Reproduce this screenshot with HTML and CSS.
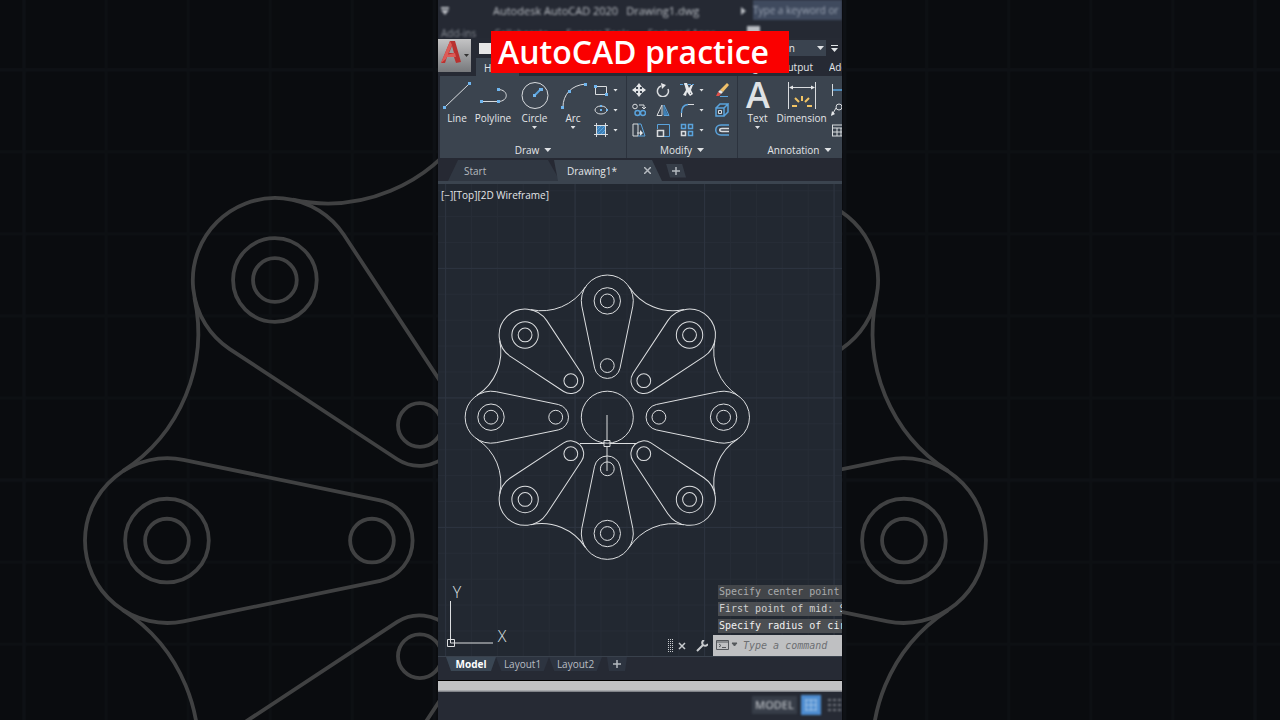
FILE: index.html
```
<!DOCTYPE html>
<html lang="en">
<head>
  <meta charset="utf-8">
  <title>AutoCAD practice</title>
  <link rel="stylesheet" href="styles.css">
</head>
<body>
  <!-- shared drawing parts -->
  <svg class="defs" width="0" height="0" aria-hidden="true">
    <defs>
      <g id="arm">
        <path d="M-25.5 -111.1A26 26 0 1 1 25.5 -111.1L12.7 -49A13 13 0 0 1 -12.7 -49Z"/>
        <circle cx="0" cy="-116.3" r="13.2"/>
        <circle cx="0" cy="-116.3" r="6.9"/>
        <circle cx="0" cy="-51.6" r="6.9"/>
        <path d="M-21.9 -130.3A52 52 0 0 1 -76.6 -107.6"/>
      </g>
      <g id="wheel">
        <use href="#arm"/>
        <use href="#arm" transform="rotate(45)"/>
        <use href="#arm" transform="rotate(90)"/>
        <use href="#arm" transform="rotate(135)"/>
        <use href="#arm" transform="rotate(180)"/>
        <use href="#arm" transform="rotate(225)"/>
        <use href="#arm" transform="rotate(270)"/>
        <use href="#arm" transform="rotate(315)"/>
      </g>
      <pattern id="minor" x="7.1" y="8.9" width="25.9" height="25.9" patternUnits="userSpaceOnUse">
        <path class="grid-minor" d="M0 .5H25.9M.5 0V25.9"/>
      </pattern>
      <pattern id="major" x="7.1" y="8.9" width="129.5" height="129.5" patternUnits="userSpaceOnUse">
        <path class="grid-major" d="M0 .5H129.5M.5 0V129.5"/>
      </pattern>
    </defs>
  </svg>

  <svg class="backdrop" viewBox="0 0 404 720" preserveAspectRatio="xMidYMid slice" aria-hidden="true">
    <g class="backdrop-grid">
      <rect width="404" height="720" fill="url(#minor)"/>
      <rect width="404" height="720" fill="url(#major)"/>
    </g>
    <use class="lines" href="#wheel" transform="translate(169 417)"/>
  </svg>

  <main class="phone">
    <header class="titlebar">
      <div class="title-row">
        <svg class="title-arrow" width="8" height="8" viewBox="0 0 8 8"><path d="M0 0h8v2H0zM0 3h8L4 8z"/></svg>
        <span class="app-name">Autodesk AutoCAD 2020</span>
        <span class="doc-name">Drawing1.dwg</span>
        <svg class="title-next" width="5" height="8" viewBox="0 0 5 8"><path d="M0 0l5 4-5 4z"/></svg>
        <input class="search" type="text" aria-label="Search" placeholder="Type a keyword or phrase">
      </div>
      <nav class="menu-row">
        <a href="#">Add-ins</a>
        <a href="#">Collaborate</a>
        <a href="#">Express Tools</a>
        <a href="#">Featured Apps</a>
        <span class="menu-box"></span>
      </nav>
    </header>

    <section class="quick">
      <button class="app-button" aria-label="Application menu">
        <svg width="33" height="33" viewBox="0 0 33 33">
          <path fill="#b9312f" d="M3 24L12 2h5l6 21-5 1-2-6H9l-2 6z"/>
          <path fill="#dc5b56" d="M3 24L12 2l2 4-6 14zM8 16l9-2 1 4H8z"/>
          <path fill="#9c9fa1" d="M11 14l3-7 2 7z"/>
          <path fill="#333" d="M26 15h5l-2.500 3z"/>
        </svg>
      </button>
      <div class="quick-main">
        <div class="quick-row">
          <span class="new-file"></span>
          <div class="workspace">
            <select aria-label="Workspace"><option>Drafting &amp; Annotation</option></select>
            <i class="caret big"></i>
          </div>
          <svg class="customize" width="7" height="7" viewBox="0 0 7 7"><path d="M0 0h7v1H0zM0 3h7L3.500 7z"/></svg>
        </div>
        <nav class="ribbon-tabs">
          <a class="tab-home" href="#">Home</a>
          <a class="tab-manage" href="#">Manage</a>
          <a class="tab-output" href="#">Output</a>
          <a href="#">Add-ins</a>
        </nav>
      </div>
    </section>

    <section class="ribbon">
      <div class="panel draw">
        <div class="tools">
          <button class="tool line">
            <svg width="28" height="28" viewBox="0 0 28 28"><path class="w" d="M2 26L26 3"/><path class="dot" d="M0 25h3v3H0zM25 1h3v3h-3z"/></svg>
            Line
          </button>
          <button class="tool polyline">
            <svg width="28" height="28" viewBox="0 0 28 28"><path class="w" d="M2 20.500H19C30 20.500 30 8.500 19 8.500"/><path class="dot" d="M1 19h3v3H1zM18 19h3v3h-3zM18 7h3v3h-3z"/></svg>
            Polyline
          </button>
          <button class="tool circle">
            <svg width="28" height="28" viewBox="0 0 28 28"><circle class="w" cx="14" cy="14.500" r="13"/><path class="b thick" d="M14 14l6-6"/><path class="dot" d="M12 13h3v3h-3zM18 7h4v3h-4z"/></svg>
            Circle
            <i class="caret"></i>
          </button>
          <button class="tool arc">
            <svg width="28" height="28" viewBox="0 0 28 28"><path class="w" d="M4 26C4 14 12 4 27 3"/><path class="dot" d="M2 25h3v3H2zM9 9h3v3H9zM25 2h3v3h-3z"/></svg>
            Arc
            <i class="caret"></i>
          </button>
          <div class="small-tools">
            <button aria-label="Rectangle"><svg width="14" height="14" viewBox="0 0 14 14"><path class="w" d="M1.500 3.500H12.500V11.500H1.500z"/><path class="dot" d="M0 2h3v3H0zM11 10h3v3h-3z"/></svg><i class="caret"></i></button>
            <button aria-label="Ellipse"><svg width="14" height="14" viewBox="0 0 14 14"><ellipse class="w" cx="7" cy="7" rx="6" ry="4"/><path class="dot" d="M6 6h2v2H6zM12 6h2v2h-2zM6 2h2v2H6z"/></svg><i class="caret"></i></button>
            <button aria-label="Hatch"><svg width="14" height="14" viewBox="0 0 14 14"><path fill="#3e7fb5" d="M3 3h8v8H3z"/><path class="b" d="M3 7l4-4M3 11l8-8M7 11l4-4"/><path class="w" d="M0 2.500H14M0 11.500H14M2.500 0V14M11.500 0V14"/></svg><i class="caret"></i></button>
          </div>
        </div>
        <button class="panel-title">Draw <i class="caret big"></i></button>
      </div>

      <div class="panel modify">
        <div class="modify-tools">
          <button aria-label="Move"><svg width="14" height="14" viewBox="0 0 14 14"><path class="w thick" d="M7 2V12M2 7H12"/><path class="wf" d="M7 0l3 4H4zM7 14l3-4H4zM0 7l4-3v6zM14 7l-4-3v6z"/></svg></button>
          <button aria-label="Rotate"><svg width="14" height="14" viewBox="0 0 14 14"><path class="w semi" d="M5 3A5.500 5.500 0 1 0 12 6"/><path class="wf" d="M5 0l5 2-4 4z"/></svg></button>
          <button aria-label="Trim"><svg width="14" height="14" viewBox="0 0 14 14"><path class="b" stroke-dasharray="3 1" d="M0 1.500H14"/><path class="wf" d="M4 0h3l2 5 2-3h2l-2 5 2 4-3 2-3-4-1 4-3-1 3-5z"/><path fill="#3b444f" d="M10 9l1 2-1 0z"/></svg><i class="caret"></i></button>
          <button aria-label="Erase"><svg width="14" height="14" viewBox="0 0 14 14"><path fill="#f0c06a" d="M12 0l2 2-6 7-3-2z"/><path fill="#e9eaea" d="M5 7l3 2-2 2-3-2z"/><path fill="#e04f49" d="M3 9l3 2-2 2H1z"/><path class="b" d="M5 13.500h8"/></svg></button>

          <button aria-label="Copy"><svg width="14" height="14" viewBox="0 0 14 14"><circle class="w" cx="3" cy="3.500" r="2.300"/><path class="w" d="M7 2h5v3M10 4l2 2 2-2"/><circle class="b semi" cx="5.500" cy="10" r="2.500"/><circle class="b semi" cx="11" cy="10" r="2.500"/></svg></button>
          <button aria-label="Mirror"><svg width="14" height="14" viewBox="0 0 14 14"><path class="w" d="M6 2V12.500H1z"/><path class="b" d="M8 2v10.500h5z"/><path fill="#3e7fb5" d="M8 4v8h4z"/></svg></button>
          <button aria-label="Fillet"><svg width="14" height="14" viewBox="0 0 14 14"><path class="w" d="M1.500 14V9M8 1.500h6"/><path class="b semi" d="M1.500 10Q1.500 2 8 1.500"/></svg><i class="caret"></i></button>
          <button aria-label="Explode"><svg width="14" height="14" viewBox="0 0 14 14"><path class="b semi" d="M1 5h8v8H1zM1 5l4-4h8l-4 4M13 1v8l-4 4"/><path class="w" d="M3.500 7.500h3v3h-3z"/></svg></button>

          <button aria-label="Stretch"><svg width="14" height="14" viewBox="0 0 14 14"><path class="w" d="M1 1h5v12H1zM5 10h4"/><path class="wf" d="M8 7l3 3-3 3z"/><path class="b" d="M6 1h3l4 12H6"/></svg></button>
          <button aria-label="Scale"><svg width="14" height="14" viewBox="0 0 14 14"><path class="b" d="M1.500 6V1.500h12v12H8"/><path class="w semi" d="M1.500 7.500h6v6h-6z"/></svg></button>
          <button aria-label="Array"><svg width="14" height="14" viewBox="0 0 14 14"><path class="b semi" d="M1.500 1.500h4v4h-4zM8.500 1.500h4v4h-4zM8.500 8.500h4v4h-4z"/><path class="w semi" d="M1.500 8.500h4v4h-4z"/></svg><i class="caret"></i></button>
          <button aria-label="Offset"><svg width="14" height="14" viewBox="0 0 14 14"><path class="b semi" d="M14 2H6C-1 2-1 12 6 12h8"/><path class="w semi" d="M14 5.500H7C4 5.500 4 8.500 7 8.500h7"/></svg></button>
        </div>
        <button class="panel-title">Modify <i class="caret big"></i></button>
      </div>

      <div class="panel annotation">
        <div class="tools">
          <button class="tool text">
            <svg width="28" height="28" viewBox="0 0 28 28"><text class="big-a" x="14" y="27" text-anchor="middle">A</text></svg>
            Text
            <i class="caret"></i>
          </button>
          <button class="tool dimension">
            <svg width="28" height="28" viewBox="0 0 28 28"><path class="w" d="M.5 1V28M27.500 1V28M2 6.500H26"/><path class="wf" d="M1 6.500l4-2v4zM27 6.500l-4-2v4z"/><path fill="none" stroke="#f2c465" stroke-width="2" d="M14 15v5M7 17l4 4M21 17l-4 4M4 25h5M24 25h-5"/></svg>
            Dimension
          </button>
          <div class="small-tools">
            <button aria-label="Linear"><svg width="14" height="14" viewBox="0 0 14 14"><path class="w" d="M1.500 1V13"/><path class="b semi" d="M2 7H14"/></svg></button>
            <button aria-label="Leader"><svg width="14" height="14" viewBox="0 0 14 14"><path class="w" d="M1 12l4-7"/><circle class="w" cx="8" cy="4" r="3"/><path class="wf" d="M0 13l1-5 3 3z"/></svg></button>
            <button aria-label="Table"><svg width="14" height="14" viewBox="0 0 14 14"><path class="w" d="M1 2h13M1 5h13M1 9h13M1 13h13M1.500 2V13M6 5v8M10 5v8"/></svg></button>
          </div>
        </div>
        <button class="panel-title">Annotation <i class="caret big"></i></button>
      </div>
    </section>

    <nav class="file-tabs">
      <button class="file-tab start">Start</button>
      <button class="file-tab active">Drawing1* <svg width="7" height="7" viewBox="0 0 7 7"><path d="M0 0l7 7M7 0L0 7"/></svg></button>
      <button class="add-tab" aria-label="New drawing"><svg width="8" height="8" viewBox="0 0 8 8"><path d="M4 0V8M0 4H8"/></svg></button>
    </nav>

    <section class="canvas">
      <svg class="drawing" viewBox="0 184 404 472" preserveAspectRatio="xMidYMid slice">
        <rect y="184" width="404" height="472" fill="url(#minor)"/>
        <rect y="184" width="404" height="472" fill="url(#major)"/>
        <g class="lines">
          <use href="#wheel" transform="translate(169.300 417.200)"/>
          <circle cx="169.300" cy="417.200" r="26"/>
          <path d="M169 415V440M169 446V471M142 443.500H166M172 443.500H198"/>
          <path d="M166 440.500h6v6h-6z"/>
          <!-- ucs icon -->
          <path d="M12.500 601V643H55M9.500 639.500h7v7h-7z"/>
        </g>
        <text class="axis" x="19" y="598" text-anchor="middle">Y</text>
        <text class="axis" x="64" y="642" text-anchor="middle">X</text>
      </svg>
      <span class="view-label">[−][Top][2D Wireframe]</span>

      <div class="command">
        <p class="old">Specify center point for circle</p>
        <p class="mid">First point of mid: Second point</p>
        <p class="last">Specify radius of circle</p>
        <div class="command-row">
          <svg class="grip" width="5" height="16" viewBox="0 0 5 16"><path stroke-dasharray="1 1" d="M.5 1V15M2.500 1V15M4.500 1V15"/></svg>
          <button aria-label="Close"><svg width="8" height="8" viewBox="0 0 8 8"><path class="semi" d="M1 1l6 6M7 1L1 7"/></svg></button>
          <button aria-label="Customize"><svg width="12" height="12" viewBox="0 0 12 12"><path class="thick" d="M1 11l6-6M8 0Q5 2 7 5q3 2 5-1"/></svg></button>
          <label class="prompt" for="cmd">
            <svg width="22" height="12" viewBox="0 0 22 12"><path d="M.5 1.500h12v9H.5zM.5 3h12M3 5l2 1.500L3 8M6 8.500h4"/><path class="tri" d="M16 4h5l-2.500 3z"/></svg>
          </label>
          <input id="cmd" type="text" aria-label="Command" placeholder="Type a command">
        </div>
      </div>
    </section>

    <nav class="layout-tabs">
      <button class="layout model">Model</button>
      <button class="layout">Layout1</button>
      <button class="layout">Layout2</button>
      <button class="layout plus" aria-label="New layout"><svg width="8" height="8" viewBox="0 0 8 8"><path d="M4 0V8M0 4H8"/></svg></button>
    </nav>

    <footer class="status">
      <div class="scroll"></div>
      <div class="status-row">
        <button class="model-button">MODEL</button>
        <button class="grid-on" aria-label="Grid"><svg width="12" height="12" viewBox="0 0 12 12"><path d="M0 1h12M0 6h12M0 11h12M1 0v12M6 0v12M11 0v12"/></svg></button>
        <button class="snap" aria-label="Snap"><svg width="14" height="14" viewBox="0 0 14 14"><path stroke-dasharray="3 2" d="M0 2h14M0 7h14M0 12h14"/></svg></button>
      </div>
    </footer>

    <h1 class="caption">AutoCAD practice</h1>
  </main>
</body>
</html>
```

FILE: styles.css
```
* {
  box-sizing: border-box;
}
body {
  margin: 0;
  height: 100vh;
  overflow: hidden;
  background: #0a0c0f;
  color: #e4e6e9;
  font-family: "Open Sans", "Noto Sans", sans-serif;
  font-size: 10px;
  line-height: 14px;
  display: flex;
  justify-content: center;
}
button,
input,
select {
  font: inherit;
  color: inherit;
  background: none;
  border: 0;
  padding: 0;
  margin: 0;
}
button {
  cursor: pointer;
}
a {
  color: inherit;
  text-decoration: none;
}
svg {
  display: block;
  flex: none;
}
.defs {
  position: absolute;
}

/* enlarged dim copy of the drawing behind the video */
.backdrop {
  position: absolute;
  width: 100%;
  height: 100%;
}
.backdrop .lines {
  stroke: #404142;
  stroke-width: 1.2;
}
.backdrop-grid {
  opacity: 0.12;
}
.lines {
  fill: none;
  stroke: #dcdee0;
}
.grid-minor {
  stroke: #262c36;
}
.grid-major {
  stroke: #2d3440;
}

.phone {
  position: relative;
  height: 100%;
  aspect-ratio: 101 / 180;
  overflow: hidden;
  background: #262a34;
  display: flex;
  flex-direction: column;
}

/* title bar */
.titlebar {
  height: 38px;
  overflow: hidden;
  color: #b9bdc3;
  background: #252933;
}
.title-row {
  height: 22px;
  display: flex;
  align-items: center;
  padding-left: 3px;
  font-size: 11px;
  filter: blur(1px);
}
.titlebar svg {
  fill: #b9bdc3;
}
.app-name {
  margin-left: 44px;
  white-space: nowrap;
}
.doc-name {
  margin-left: 8px;
}
.title-next {
  margin-left: auto;
}
.search {
  width: 89px;
  height: 20px;
  margin: 0 0 2px 7px;
  background: #3f4a5e;
  font-size: 10px;
}
.search::placeholder {
  color: #9aa3b2;
}
.menu-row {
  display: flex;
  gap: 18px;
  padding: 4px 3px;
  color: #858a92;
  white-space: nowrap;
  filter: blur(1px);
}
.menu-box {
  width: 13px;
  height: 8px;
  margin-left: 14px;
  background: #b9bdc3;
}

/* quick access */
.quick {
  height: 38px;
  display: flex;
}
.app-button {
  width: 33px;
  height: 33px;
  margin-top: 1px;
  background: linear-gradient(#c4c4c5, #77797c);
}
.quick-main {
  flex: 1;
  min-width: 0;
}
.quick-row {
  height: 20px;
  padding: 0 4px 0 8px;
  display: flex;
  align-items: center;
}
.new-file {
  width: 14px;
  height: 11px;
  background: #e6e6e6;
}
.workspace {
  width: 150px;
  height: 16px;
  margin-left: auto;
  padding-right: 2px;
  display: flex;
  align-items: center;
  background: #3a434f;
}
.workspace select {
  flex: 1;
  min-width: 0;
  padding-right: 22px;
  appearance: none;
  text-align-last: right;
}
.customize {
  fill: #dfe2e5;
  margin-left: 5px;
}
.ribbon-tabs {
  height: 18px;
  display: flex;
  align-items: center;
  padding-left: 5px;
  white-space: nowrap;
}
.tab-home {
  width: 43px;
  height: 18px;
  padding: 3px 8px 0;
  background: #3b444f;
}
.tab-manage {
  margin-left: auto;
}
.tab-output {
  margin: 0 16px;
}
.ribbon-tabs a:last-child {
  width: 13px;
  overflow: hidden;
}

/* ribbon */
.ribbon {
  height: 82px;
  margin-left: 2px;
  display: flex;
  overflow: hidden;
  background: #3b444f;
}
.panel {
  flex: none;
  display: flex;
  flex-direction: column;
  justify-content: space-between;
  border-right: 1px solid #2c333e;
}
.draw {
  width: 187px;
}
.modify {
  width: 111px;
}
.annotation {
  width: 124px;
}
.tools {
  display: flex;
  height: 62px;
}
.tool {
  padding-top: 5px;
  display: flex;
  flex-direction: column;
  align-items: center;
}
.tool svg {
  margin-bottom: 2px;
}
.line {
  width: 34px;
}
.polyline {
  width: 38px;
}
.circle {
  width: 45px;
}
.arc {
  width: 32px;
}
.text {
  width: 39px;
}
.dimension {
  width: 49px;
}
.small-tools {
  padding: 4px 0 0 5px;
}
.small-tools button,
.modify-tools button {
  height: 20px;
  display: flex;
  align-items: center;
  gap: 5px;
}
.modify-tools {
  padding: 4px 0 0 5px;
  display: grid;
  grid-template-columns: 24px 24px 35px 24px;
}
.w {
  fill: none;
  stroke: #d9dcdf;
}
.b {
  fill: none;
  stroke: #5aa3dc;
}
.semi {
  stroke-width: 1.5;
}
.thick {
  stroke-width: 2;
}
.wf {
  fill: #e6e8ea;
}
.dot {
  fill: #6fb5ee;
}
.big-a {
  fill: #dfe2e5;
  font-size: 36px;
  font-weight: 600;
}
.caret {
  width: 5px;
  height: 3px;
  background: #dfe2e5;
  clip-path: polygon(0 0, 100% 0, 50% 100%);
}
.tool .caret {
  margin-top: 1px;
}
.caret.big {
  width: 7px;
  height: 4px;
}
.panel-title {
  height: 16px;
  display: flex;
  align-items: center;
  justify-content: center;
  gap: 5px;
}

/* file tabs */
.file-tabs {
  height: 26px;
  display: flex;
  align-items: center;
  padding: 2px 0 0 10px;
  background: #262933;
  border-bottom: 3px solid #3b444f;
}
.file-tab {
  height: 21px;
  display: flex;
  align-items: center;
  justify-content: space-between;
}
.start {
  width: 112px;
  padding-left: 16px;
  justify-content: flex-start;
  color: #b4b9bf;
  background: #303742;
  clip-path: polygon(0 100%, 10px 0, 100px 0, 112px 100%);
}
.active {
  width: 108px;
  margin-left: -6px;
  padding: 0 11px 0 13px;
  background: #3b444f;
  clip-path: polygon(0 0, 98px 0, 100% 100%, 4px 100%);
}
.file-tab svg,
.add-tab svg,
.plus svg {
  stroke: #b4b9bf;
  stroke-width: 1.5;
}
.add-tab {
  width: 20px;
  height: 14px;
  margin-left: 4px;
  padding-left: 6px;
  background: #363d48;
  clip-path: polygon(0 0, 80% 0, 100% 100%, 20% 100%);
}

/* drawing area */
.canvas {
  position: relative;
  flex: 1;
  min-height: 0;
  background: #222831;
}
.drawing {
  width: 100%;
  height: 100%;
}
.axis {
  fill: #dfe2e5;
  font-size: 16px;
  font-weight: 300;
}
.view-label {
  position: absolute;
  top: 4px;
  left: 3px;
}
.command {
  position: absolute;
  right: 0;
  bottom: 0;
  width: 174px;
  display: flex;
  flex-direction: column;
  gap: 3px;
  font-family: "DejaVu Sans Mono", monospace;
}
.command p {
  margin: 0 0 0 50px;
  padding-left: 1px;
  white-space: nowrap;
  overflow: hidden;
  background: #4b4e52;
}
.command .old {
  color: #a9abad;
  background: #424549;
}
.command .mid {
  color: #cfd0d1;
}
.command .last {
  color: #f1f1f1;
}
.command-row {
  height: 21px;
  margin-top: -1px;
  display: flex;
  align-items: center;
}
.command-row svg {
  fill: none;
  stroke: #c9cccf;
}
.command-row button {
  margin-left: 5px;
}
.command-row button + button {
  margin-left: 10px;
}
.prompt,
#cmd {
  height: 21px;
  background: #bfc0c2;
}
.prompt {
  margin-left: 5px;
  padding: 4px 3px;
}
.prompt svg {
  stroke: #55585c;
}
.prompt .tri {
  fill: #55585c;
}
#cmd {
  flex: 1;
  min-width: 0;
  padding-left: 2px;
  font-style: italic;
}
#cmd::placeholder {
  color: #6d6f72;
}

/* layout tabs */
.layout-tabs {
  height: 25px;
  display: flex;
  align-items: flex-start;
  padding-left: 8px;
  border-top: 1px solid #39414c;
  border-bottom: 1px solid #000;
}
.layout {
  width: 53px;
  height: 14px;
  background: #2d3440;
  color: #b9bdc3;
  clip-path: polygon(0 0, 100% 0, 90% 100%, 10% 100%);
}
.model {
  width: 50px;
  color: #fff;
  font-weight: 700;
  background: #3a4653;
}
.plus {
  width: 20px;
  margin-left: 5px;
  padding-left: 6px;
}

/* status bar */
.status {
  height: 39px;
}
.scroll {
  height: 11px;
  background: linear-gradient(#c1c2c4 80%, #6e7178);
}
.status-row {
  height: 28px;
  display: flex;
  align-items: center;
  justify-content: flex-end;
  padding-bottom: 2px;
  filter: blur(1px);
}
.status-row svg {
  fill: none;
  stroke: #a9c9ea;
}
.model-button {
  padding: 2px 3px;
  font-size: 11px;
  font-weight: 600;
  color: #b4b8bd;
  background: #373d48;
}
.grid-on {
  width: 20px;
  height: 20px;
  margin: 0 7px 0 4px;
  padding: 4px;
  background: #4c8cd0;
}
.snap {
  width: 14px;
}
.snap svg {
  stroke: #777c84;
  stroke-width: 2;
}

/* caption over the video */
.caption {
  position: absolute;
  top: 31px;
  left: 53px;
  width: 298px;
  margin: 0;
  padding-left: 7px;
  background: #fa0000;
  color: #fff;
  font-size: 32px;
  font-weight: 600;
  line-height: 42px;
  white-space: nowrap;
}
```
